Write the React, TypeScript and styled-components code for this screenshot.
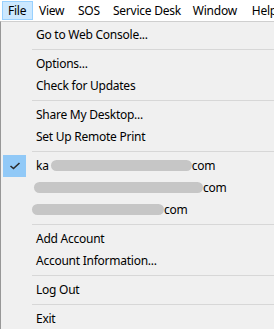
import React from "react";
import styled, { createGlobalStyle } from "styled-components";

const GlobalStyle = createGlobalStyle`
  html, body {
    margin: 0;
    padding: 0;
    background: #ffffff;
    overflow: hidden;
  }
  body {
    font-family: "Noto Sans", "Liberation Sans", sans-serif;
    font-size: 12px;
    letter-spacing: -0.25px;
    color: #000;
  }
`;

interface Email {
  lead: string;
  pillStart: number;
  pillWidth: number;
  checked?: boolean;
}

const emails: Email[] = [
  { lead: "ka", pillStart: 2, pillWidth: 141, checked: true },
  { lead: "", pillStart: -2, pillWidth: 169 },
  { lead: "", pillStart: -4, pillWidth: 132 },
];

// widths of the top menu entries, as the native bar lays them out
const topMenus = [
  { label: "File", w: 31 },
  { label: "View", w: 39 },
  { label: "SOS", w: 35 },
  { label: "Service Desk", w: 79 },
  { label: "Window", w: 59 },
  { label: "Help", w: 40 },
];

const App: React.FC = () => {
  return (
    <>
      <GlobalStyle />
      <Window>
        <MenuBar>
          {topMenus.map((m, i) => (
            <TopItem key={m.label} $w={m.w} $active={i === 0}>
              {m.label}
            </TopItem>
          ))}
        </MenuBar>
        <Dropdown>
          <Item>Go to Web Console...</Item>
          <Separator />
          <Item>Options...</Item>
          <Item>Check for Updates</Item>
          <Separator />
          <Item>Share My Desktop...</Item>
          <Item>Set Up Remote Print</Item>
          <Separator />
          {emails.map((e, i) => (
            <Item key={i}>
              {e.checked && (
                <CheckBox>
                  <svg width="12" height="10" viewBox="0 0 12 10">
                    <polyline
                      points="1.5,5 4.5,7.5 10.5,2"
                      fill="none"
                      stroke="#2b2b2b"
                      strokeWidth="1.6"
                    />
                  </svg>
                </CheckBox>
              )}
              {e.lead}
              <Redacted
                style={{ marginLeft: e.pillStart, width: e.pillWidth }}
              />
              com
            </Item>
          ))}
          <Separator />
          <Item>Add Account</Item>
          <Item>Account Information...</Item>
          <Separator />
          <Item>Log Out</Item>
          <Separator />
          <Item>Exit</Item>
        </Dropdown>
      </Window>
    </>
  );
};

export default App;

const Window = styled.div`
  width: 274px;
  height: 329px;
  display: flex;
  flex-direction: column;
  background: #ffffff;
`;

const MenuBar = styled.div`
  height: 21px;
  display: flex;
  align-items: flex-start;
  padding-left: 2px;
  white-space: nowrap;
  overflow: hidden;
`;

const TopItem = styled.div<{ $active?: boolean; $w: number }>`
  flex: 0 0 ${(p) => p.$w}px;
  height: 19px;
  margin-top: 1px;
  padding: 0 5px;
  line-height: 17px;
  box-sizing: border-box;
  border: 1px solid ${(p) => (p.$active ? "#99d1ff" : "transparent")};
  background: ${(p) => (p.$active ? "#cce8ff" : "transparent")};
`;

const Dropdown = styled.div`
  flex: 1;
  background: #f0f0f0;
  border-top: 1px solid #cfcfcf;
  border-left: 1px solid #979797;
  padding-top: 1px;
  display: flex;
  flex-direction: column;
`;

const Item = styled.div`
  position: relative;
  height: 22px;
  display: flex;
  align-items: center;
  padding-left: 35px;
  white-space: nowrap;
`;

const Separator = styled.div`
  height: 1px;
  margin: 4px 0 2px 31px;
  background: #d7d7d7;
`;

const CheckBox = styled.div`
  position: absolute;
  left: 2px;
  top: 1px;
  width: 23px;
  height: 22px;
  background: #91c9f7;
  display: flex;
  align-items: center;
  justify-content: center;
`;

const Redacted = styled.span`
  display: inline-block;
  height: 11px;
  border-radius: 6px;
  background: #c6c6c6;
`;
